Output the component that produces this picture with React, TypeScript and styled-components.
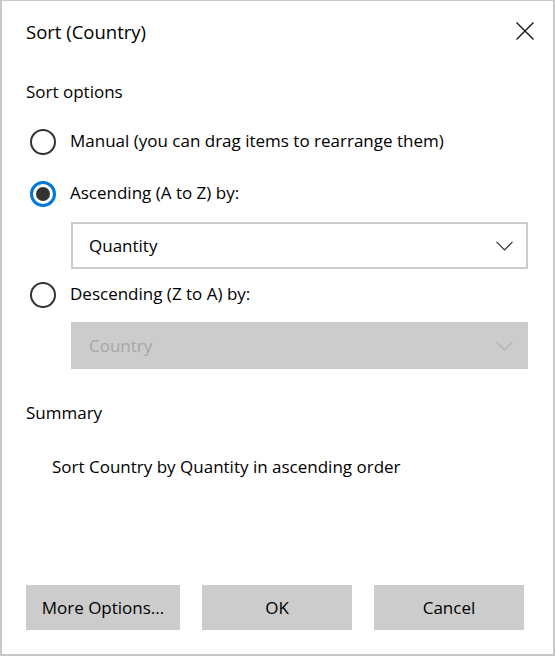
import React from "react";
import styled, { createGlobalStyle } from "styled-components";

const Global = createGlobalStyle`
  html, body { margin: 0; padding: 0; background: #ffffff; }
  body { font-family: "Open Sans", "Noto Sans", "Liberation Sans", sans-serif; color: #000; }
  * { box-sizing: border-box; }
`;

const Dialog = styled.div`
  width: 555px;
  height: 656px;
  border: 2px solid #c8c8c8;
  border-top-width: 1px;
  background: #fff;
  display: flex;
  flex-direction: column;
  padding: 0 25px 24px 24px;
`;

const Header = styled.div`
  display: flex;
  align-items: center;
  justify-content: space-between;
  height: 28px;
  margin-top: 17px;
`;

const Title = styled.h1`
  margin: 0;
  font-size: 18.5px;
  font-weight: 400;
  line-height: 28px;
  color: #000;
`;

const CloseButton = styled.button`
  border: 0;
  background: transparent;
  padding: 0;
  width: 20px;
  height: 20px;
  margin-right: -7px;
  margin-top: -3px;
  display: flex;
  align-items: center;
  justify-content: center;
  cursor: pointer;
`;

const SectionLabel = styled.div<{ $top: number }>`
  font-size: 17px;
  line-height: 22px;
  height: 22px;
  margin-top: ${(p) => p.$top}px;
`;

const RadioRow = styled.label<{ $top: number }>`
  display: flex;
  align-items: center;
  height: 32px;
  margin-top: ${(p) => p.$top}px;
  font-size: 17px;
  line-height: 22px;
  gap: 14px;
  padding-left: 4px;
`;

const RadioCircle = styled.span<{ $checked?: boolean }>`
  width: 26px;
  height: 26px;
  border-radius: 50%;
  border: ${(p) => (p.$checked ? "3px solid #0078d7" : "2px solid #333333")};
  display: flex;
  align-items: center;
  justify-content: center;
  flex: none;
  &::after {
    content: "";
    display: ${(p) => (p.$checked ? "block" : "none")};
    width: 14px;
    height: 14px;
    border-radius: 50%;
    background: #333333;
  }
`;

const RadioText = styled.span`
  padding-bottom: 2px;
`;

const Combo = styled.div<{ $top: number; $disabled?: boolean }>`
  margin-top: ${(p) => p.$top}px;
  margin-left: 45px;
  height: 47px;
  border: 2px solid #cccccc;
  background: ${(p) => (p.$disabled ? "#cccccc" : "#ffffff")};
  color: ${(p) => (p.$disabled ? "#a6a6a6" : "#000")};
  display: flex;
  align-items: center;
  justify-content: space-between;
  padding: 0 13px 0 16px;
  font-size: 17px;
`;

const SummaryText = styled.div`
  margin-top: 32px;
  margin-left: 26px;
  font-size: 17px;
  line-height: 22px;
`;

const Footer = styled.div`
  margin-top: auto;
  display: flex;
  gap: 22px;
`;

const Button = styled.button<{ $w: number }>`
  width: ${(p) => p.$w}px;
  height: 45px;
  border: 0;
  background: #cccccc;
  font-family: inherit;
  font-size: 17px;
  color: #000;
  padding: 0;
`;

const Chevron = ({ color }: { color: string }) => (
  <svg width="17" height="10" viewBox="0 0 17 10">
    <path d="M0.5 0.8 L8.5 8.8 L16.5 0.8" fill="none" stroke={color} strokeWidth="1.2" />
  </svg>
);

export default function App() {
  return (
    <>
      <Global />
      <Dialog>
        <Header>
          <Title>Sort (Country)</Title>
          <CloseButton aria-label="Close">
            <svg width="18" height="18" viewBox="0 0 18 18">
              <path d="M0.5 0.5 L17.5 17.5 M17.5 0.5 L0.5 17.5" stroke="#111" strokeWidth="1.3" fill="none" />
            </svg>
          </CloseButton>
        </Header>
        <SectionLabel $top={35}>Sort options</SectionLabel>
        <RadioRow $top={23}>
          <RadioCircle />
          <RadioText>Manual (you can drag items to rearrange them)</RadioText>
        </RadioRow>
        <RadioRow $top={20}>
          <RadioCircle $checked />
          <RadioText>Ascending (A to Z) by:</RadioText>
        </RadioRow>
        <Combo $top={12}>
          <span>Quantity</span>
          <Chevron color="#333" />
        </Combo>
        <RadioRow $top={10}>
          <RadioCircle />
          <RadioText>Descending (Z to A) by:</RadioText>
        </RadioRow>
        <Combo $top={11} $disabled>
          <span>Country</span>
          <Chevron color="#b0b0b0" />
        </Combo>
        <SectionLabel $top={33}>Summary</SectionLabel>
        <SummaryText>Sort Country by Quantity in ascending order</SummaryText>
        <Footer>
          <Button $w={154}>More Options...</Button>
          <Button $w={150}>OK</Button>
          <Button $w={150}>Cancel</Button>
        </Footer>
      </Dialog>
    </>
  );
}
